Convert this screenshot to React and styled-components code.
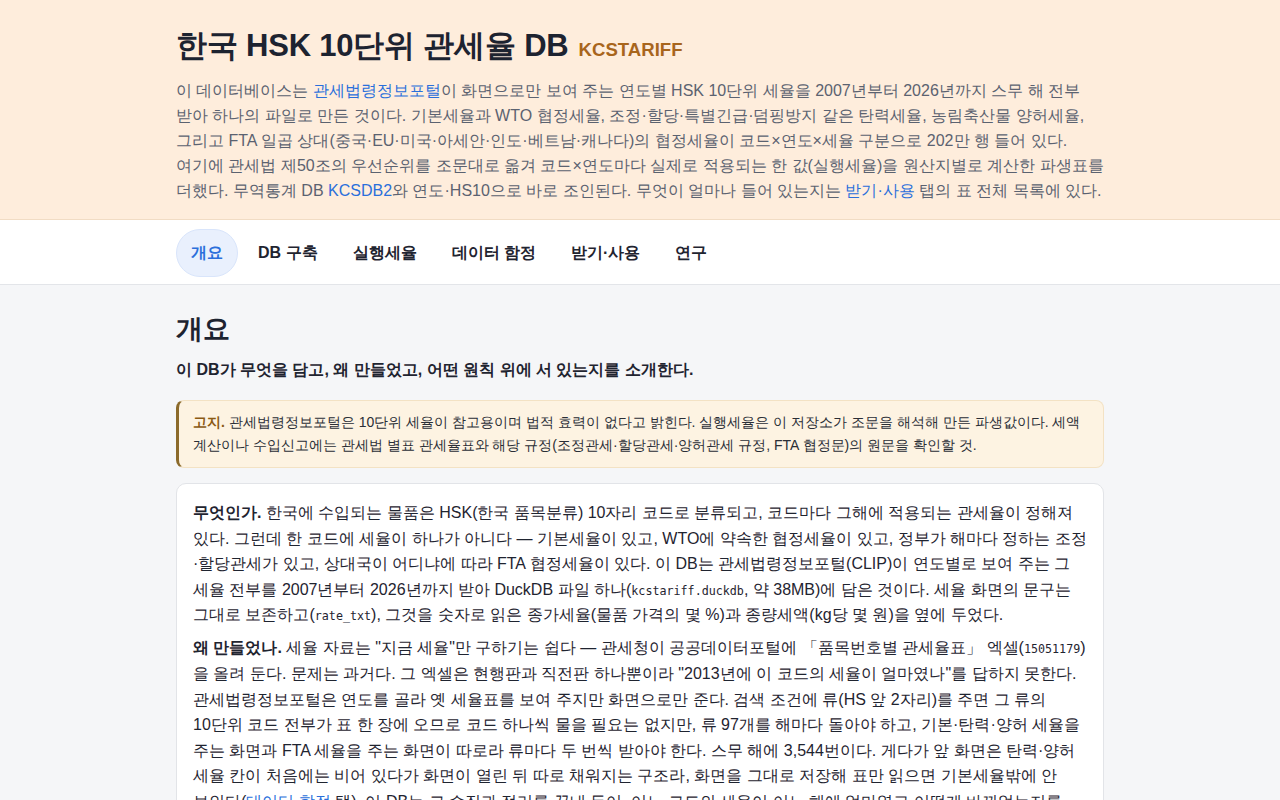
import styled, { createGlobalStyle } from "styled-components"

const Global = createGlobalStyle`
* { box-sizing: border-box; }
body {
  margin: 0;
  background: #f5f6f8;
  font-family: "Liberation Sans", sans-serif;
  color: #1f2430;
  word-break: keep-all;
}
`
const Header = styled.header`
  background: #feeddc;
  border-bottom: 1px solid #f1dcc4;
  padding: 25px 0 16px;
`
const Wrap = styled.div`
  width: 928px;
  margin: 0 auto;
`
const Title = styled.h1`
  margin: 0 0 11px;
  font-size: 31px;
  font-weight: 700;
  color: #1d2330;
  display: flex;
  align-items: baseline;
  gap: 10px;
  letter-spacing: -0.2px;
`
const Tag = styled.span`
  font-size: 18.6px;
  color: #a8651c;
  letter-spacing: 0;
`
const Lead = styled.p`
  margin: 0;
  font-size: 16px;
  line-height: 25px;
  color: #5b6270;
`
const Link = styled.a`
  color: #2a6fdb;
  text-decoration: none;
`
const Nav = styled.nav`
  background: #fff;
  border-bottom: 1px solid #e3e5e9;
  padding: 9px 0 7px;
`
const Tabs = styled.div`
  display: flex;
  gap: 5px;
`
const Tab = styled.button`
  border: 1px solid ${(p) => (p.$active ? "#d9e5fb" : "transparent")};
  background: ${(p) => (p.$active ? "#e9f0fd" : "transparent")};
  color: ${(p) => (p.$active ? "#2a6fdb" : "#1f2430")};
  font-family: inherit;
  font-size: 16px;
  font-weight: 700;
  height: 48px;
  padding: 0 14px;
  border-radius: 999px;
  cursor: pointer;
`
const Main = styled.main`
  padding: 26px 0 40px;
`
const H2 = styled.h2`
  margin: 0 0 13px;
  font-size: 27px;
  font-weight: 700;
  color: #1d2330;
`
const Sub = styled.p`
  margin: 0 0 19px;
  font-size: 16px;
  font-weight: 700;
  color: #1f2430;
`
const Notice = styled.div`
  background: #fdf3e2;
  border: 1px solid #f3e2c4;
  border-left: 3px solid #8b6a2b;
  border-radius: 8px;
  padding: 10px 14px 10px 14px;
  font-size: 14px;
  line-height: 23px;
  color: #2a2e36;
  margin-bottom: 15px;
`
const NoticeLabel = styled.b`
  color: #8b5a14;
`
const Card = styled.section`
  background: #fff;
  border: 1px solid #e2e4e8;
  border-radius: 10px;
  padding: 16px 16px;
`
const Para = styled.p`
  margin: 0 0 7.5px;
  font-size: 16px;
  line-height: 1.6;
  color: #1f2430;
`
const Code = styled.code`
  font-family: "DejaVu Sans Mono", "Liberation Mono", monospace;
  font-size: 11.7px;
`

const tabs = ["개요", "DB 구축", "실행세율", "데이터 함정", "받기·사용", "연구"]

export default function App() {
  return (
    <>
      <Global />
      <Header>
        <Wrap>
          <Title>
            한국 HSK 10단위 관세율 DB <Tag>KCSTARIFF</Tag>
          </Title>
          <Lead>
            이 데이터베이스는 <Link href="#">관세법령정보포털</Link>이 화면으로만 보여 주는 연도별 HSK 10단위 세율을 2007년부터 2026년까지 스무 해 전부 받아 하나의 파일로 만든 것이다. 기본세율과 WTO 협정세율, 조정·할당·특별긴급·덤핑방지 같은 탄력세율, 농림축산물 양허세율, 그리고 FTA 일곱 상대(중국·EU·미국·아세안·인도·베트남·캐나다)의 협정세율이 코드×연도×세율 구분으로 202만 행 들어 있다.
            <br />
            여기에 관세법 제50조의 우선순위를 조문대로 옮겨 코드×연도마다 실제로 적용되는 한 값(실행세율)을 원산지별로 계산한 파생표를 더했다. 무역통계 DB <Link href="#">KCSDB2</Link>와 연도·HS10으로 바로 조인된다. 무엇이 얼마나 들어 있는지는{" "}
            <Link href="#">받기·사용</Link> 탭의 표 전체 목록에 있다.
          </Lead>
        </Wrap>
      </Header>
      <Nav>
        <Wrap>
          <Tabs>
            {tabs.map((t, i) => (
              <Tab key={t} $active={i === 0}>
                {t}
              </Tab>
            ))}
          </Tabs>
        </Wrap>
      </Nav>
      <Main>
        <Wrap>
          <H2>개요</H2>
          <Sub>이 DB가 무엇을 담고, 왜 만들었고, 어떤 원칙 위에 서 있는지를 소개한다.</Sub>
          <Notice>
            <NoticeLabel>고지.</NoticeLabel> 관세법령정보포털은 10단위 세율이 참고용이며 법적 효력이 없다고 밝힌다. 실행세율은 이 저장소가 조문을 해석해 만든 파생값이다. 세액 계산이나 수입신고에는 관세법 별표 관세율표와 해당 규정(조정관세·할당관세·양허관세 규정, FTA 협정문)의 원문을 확인할 것.
          </Notice>
          <Card>
            <Para>
              <b>무엇인가.</b> 한국에 수입되는 물품은 HSK(한국 품목분류) 10자리 코드로 분류되고, 코드마다 그해에 적용되는 관세율이 정해져 있다. 그런데 한 코드에 세율이 하나가 아니다 — 기본세율이 있고, WTO에 약속한 협정세율이 있고, 정부가 해마다 정하는 조정·할당관세가 있고, 상대국이 어디냐에 따라 FTA 협정세율이 있다. 이 DB는 관세법령정보포털(CLIP)이 연도별로 보여 주는 그 세율 전부를 2007년부터 2026년까지 받아 DuckDB 파일 하나(<Code>kcstariff.duckdb</Code>, 약 38MB)에 담은 것이다. 세율 화면의 문구는 그대로 보존하고(<Code>rate_txt</Code>), 그것을 숫자로 읽은 종가세율(물품 가격의 몇 %)과 종량세액(kg당 몇 원)을 옆에 두었다.
            </Para>
            <Para>
              <b>왜 만들었나.</b> 세율 자료는 "지금 세율"만 구하기는 쉽다 — 관세청이 공공데이터포털에 「품목번호별 관세율표」 엑셀(<Code>15051179</Code>)<wbr />을 올려 둔다. 문제는 과거다. 그 엑셀은 현행판과 직전판 하나뿐이라 "2013년에 이 코드의 세율이 얼마였나"를 답하지 못한다. 관세법령정보포털은 연도를 골라 옛 세율표를 보여 주지만 화면으로만 준다. 검색 조건에 류(HS 앞 2자리)를 주면 그 류의 10단위 코드 전부가 표 한 장에 오므로 코드 하나씩 물을 필요는 없지만, 류 97개를 해마다 돌아야 하고, 기본·탄력·양허 세율을 주는 화면과 FTA 세율을 주는 화면이 따로라 류마다 두 번씩 받아야 한다. 스무 해에 3,544번이다. 게다가 앞 화면은 탄력·양허 세율 칸이 처음에는 비어 있다가 화면이 열린 뒤 따로 채워지는 구조라, 화면을 그대로 저장해 표만 읽으면 기본세율밖에 안 보인다(<Link href="#">데이터 함정</Link> 탭). 이 DB는 그 수집과 정리를 끝내 두어, 어느 코드의 세율이 어느 해에 얼마였고 어떻게 바뀌었는지를 바로 물을 수 있게 한다.
            </Para>
          </Card>
        </Wrap>
      </Main>
    </>
  )
}
